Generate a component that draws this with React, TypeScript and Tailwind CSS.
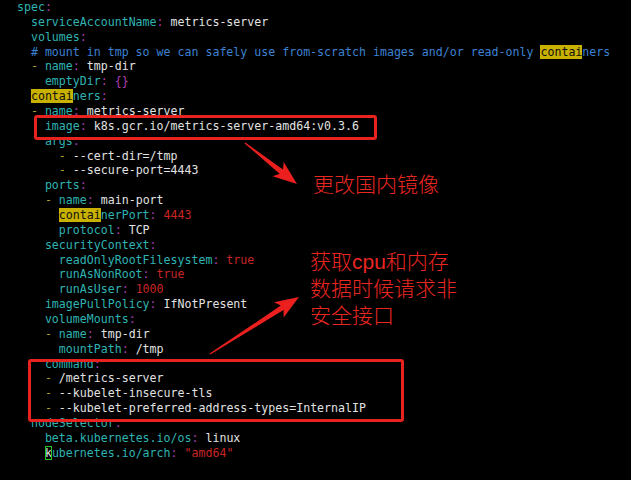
import React from "react";

type Seg = [string, string];

const K = "text-[#2fb3b3]";
const C = "text-[#b23cb2]";
const V = "text-[#e2e2e2]";
const D = "text-[#b0a230]";
const R = "text-[#c82626]";
const CM = "text-[#3c82d2]";
const H = "bg-[#c9b100] text-[#101010]";
const CUR = "outline outline-1 outline-[#22c422] -outline-offset-1 text-[#e2e2e2]";

const lines: Seg[][] = [
  [["  ", V], ["spec", K], [":", C]],
  [["    ", V], ["serviceAccountName", K], [":", C], [" metrics-server", V]],
  [["    ", V], ["volumes", K], [":", C]],
  [["    ", V], ["# mount in tmp so we can safely use from-scratch images and/or read-only ", CM], ["contai", H], ["ners", CM]],
  [["    ", V], ["-", D], [" name", K], [":", C], [" tmp-dir", V]],
  [["      ", V], ["emptyDir", K], [":", C], [" ", V], ["{}", C]],
  [["    ", V], ["contai", H], ["ners", K], [":", C]],
  [["    ", V], ["-", D], [" name", K], [":", C], [" metrics-server", V]],
  [["      ", V], ["image", K], [":", C], [" k8s.gcr.io/metrics-server-amd64:v0.3.6", V]],
  [["      ", V], ["args", K], [":", C]],
  [["        ", V], ["-", D], [" --cert-dir=/tmp", V]],
  [["        ", V], ["-", D], [" --secure-port=4443", V]],
  [["      ", V], ["ports", K], [":", C]],
  [["      ", V], ["-", D], [" name", K], [":", C], [" main-port", V]],
  [["        ", V], ["contai", H], ["nerPort", K], [":", C], [" 4443", R]],
  [["        ", V], ["protocol", K], [":", C], [" TCP", V]],
  [["      ", V], ["securityContext", K], [":", C]],
  [["        ", V], ["readOnlyRootFilesystem", K], [":", C], [" true", R]],
  [["        ", V], ["runAsNonRoot", K], [":", C], [" true", R]],
  [["        ", V], ["runAsUser", K], [":", C], [" 1000", R]],
  [["      ", V], ["imagePullPolicy", K], [":", C], [" IfNotPresent", V]],
  [["      ", V], ["volumeMounts", K], [":", C]],
  [["      ", V], ["-", D], [" name", K], [":", C], [" tmp-dir", V]],
  [["        ", V], ["mountPath", K], [":", C], [" /tmp", V]],
  [["      ", V], ["command", K], [":", C]],
  [["      ", V], ["-", D], [" /metrics-server", V]],
  [["      ", V], ["-", D], [" --kubelet-insecure-tls", V]],
  [["      ", V], ["-", D], [" --kubelet-preferred-address-types=InternalIP", V]],
  [["    ", V], ["nodeSelector", K], [":", C]],
  [["      ", V], ["beta.kubernetes.io/os", K], [":", C], [" linux", V]],
  [["      ", V], ["k", CUR], ["ubernetes.io/arch", K], [":", C], [' "amd64"', R]],
];

// tapered annotation arrow from tail to tip
function arrowPoints(x1: number, y1: number, x2: number, y2: number) {
  const dx = x2 - x1;
  const dy = y2 - y1;
  const len = Math.hypot(dx, dy);
  const ux = dx / len;
  const uy = dy / len;
  const nx = -uy;
  const ny = ux;
  const head = 24;
  const at = (d: number, w: number) =>
    `${x1 + ux * d + nx * w},${y1 + uy * d + ny * w}`;
  return [
    at(0, 0.6),
    at(len - head + 4, 2.6),
    at(len - head, 9),
    at(len, 0),
    at(len - head, -9),
    at(len - head + 4, -2.6),
    at(0, -0.6),
  ].join(" ");
}

export default function App() {
  return (
    <div className="relative w-[631px] h-[480px] bg-black overflow-hidden">
      <div className="pl-[3px] font-['DejaVu_Sans_Mono',monospace] text-[11.6px] leading-[14.87px] whitespace-pre">
        {lines.map((segs, i) => (
          <div key={i} className="h-[14.87px]">
            {segs.map(([t, c], j) => (
              <span key={j} className={c}>
                {t}
              </span>
            ))}
          </div>
        ))}
      </div>

      <div className="absolute left-[34px] top-[115px] w-[343px] h-[25px] border-[3px] border-[#e8221e] rounded-[3px]" />
      <div className="absolute left-[28px] top-[359px] w-[376px] h-[63px] border-[3px] border-[#e8221e] rounded-[3px]" />

      <svg className="absolute left-0 top-0" width="631" height="480">
        <polygon points={arrowPoints(245, 143, 297, 184)} fill="#ec1f1f" />
        <polygon points={arrowPoints(210, 354, 299, 297)} fill="#ec1f1f" />
      </svg>

      <div className="absolute left-[313px] top-[171px] text-[21px] leading-[27px] font-light text-[#ea2620] font-['Liberation_Sans','Noto_Sans_CJK_SC',sans-serif]">
        更改国内镜像
      </div>
      <div className="absolute left-[310px] top-[248px] flex flex-col text-[21px] leading-[27px] font-light text-[#ea2620] font-['Liberation_Sans','Noto_Sans_CJK_SC',sans-serif]">
        <div>获取cpu和内存</div>
        <div>数据时候请求非</div>
        <div>安全接口</div>
      </div>
    </div>
  );
}
